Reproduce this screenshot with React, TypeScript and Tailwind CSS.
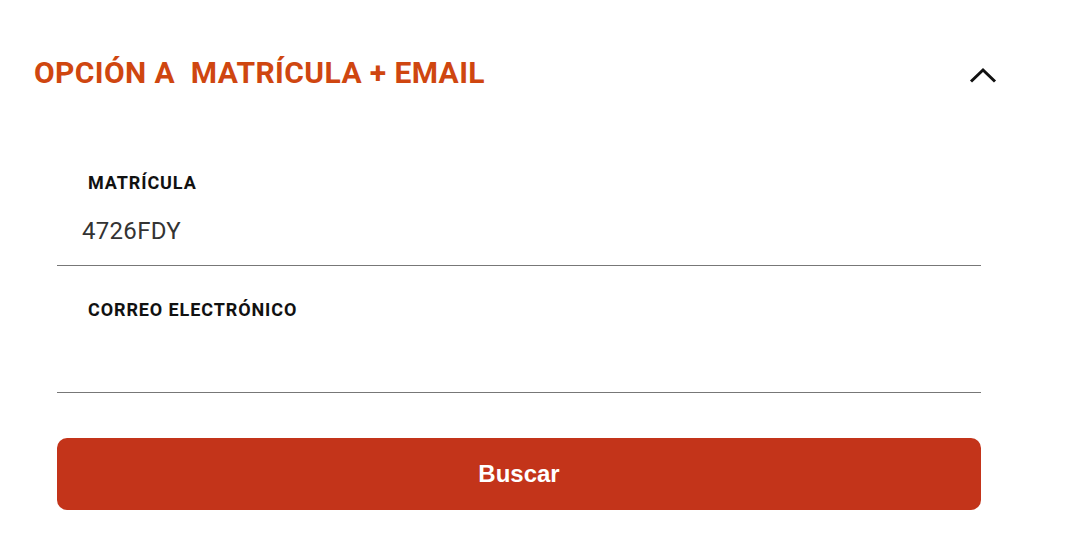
export default function App() {
  return (
    <div className="w-[1073px] h-[541px] bg-white" style={{ fontFamily: "Roboto, 'Noto Sans', sans-serif" }}>
      {/* Accordion header */}
      <div className="flex items-center justify-between pl-[34px] pr-[76px] pt-[55px]">
        <h2 className="text-[30px] leading-[36px] font-bold text-[#cf4610] tracking-[0.4px]">
          OPCIÓN A&nbsp; MATRÍCULA + EMAIL
        </h2>
        <svg width="28" height="16" viewBox="0 0 28 16" fill="none" className="mt-[4px]">
          <path d="M2 14.5 L14 3 L26 14.5" stroke="#111" strokeWidth="3" />
        </svg>
      </div>

      {/* Form */}
      <div className="pl-[57px] pr-[92px] pt-[81px]">
        <div className="border-b border-[#777]">
          <label className="block pl-[31px] text-[18px] leading-[22px] font-bold text-[#111] tracking-[0.9px]">MATRÍCULA</label>
          <div className="pl-[25px] pt-[22px] pb-[19px] text-[24px] leading-[30px] text-[#333] tracking-[0.3px]">4726FDY</div>
        </div>
        <div className="border-b border-[#777] pt-[33px]">
          <label className="block pl-[31px] text-[18px] leading-[22px] font-bold text-[#111] tracking-[0.9px]">CORREO ELECTRÓNICO</label>
          <div className="h-[71px]" />
        </div>
        <button
          className="mt-[45px] w-full h-[72px] rounded-[10px] bg-[#c3341a] text-white text-[24px] font-bold"
          style={{ fontFamily: "'Liberation Sans', Arial, sans-serif" }}
        >
          Buscar
        </button>
      </div>
    </div>
  );
}
